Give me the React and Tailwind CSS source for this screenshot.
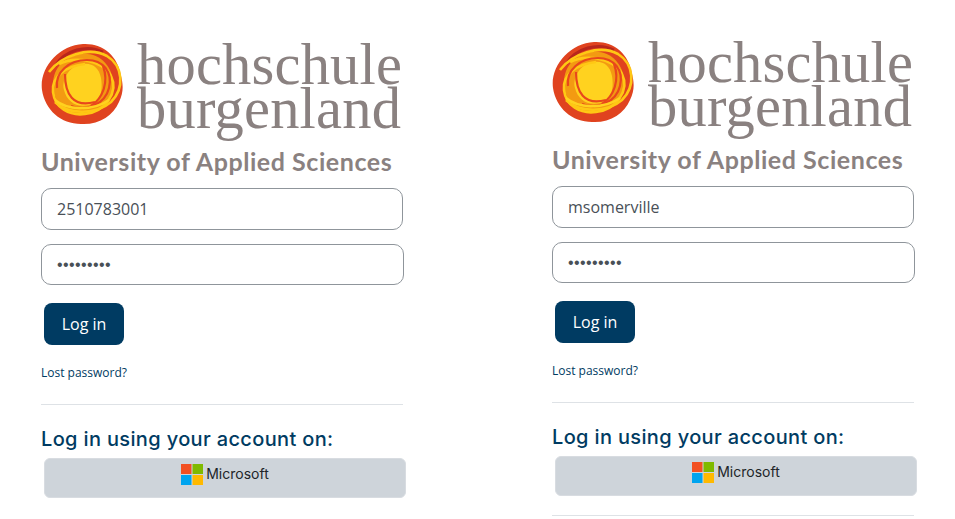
const Swirl = () => (
  <svg width="84" height="84" viewBox="0 0 84 84" className="shrink-0">
    <path d="M42 2C62 1 77 14 80 34C82 42 83 50 78 60C72 74 58 83 40 82C20 82 4 68 1 48C-2 26 18 3 42 2Z" fill="#e0431f" />
    <path d="M14 24C24 8 46 2 62 10" fill="none" stroke="#b8261c" strokeWidth="3" />
    <path d="M40 12C58 10 72 24 72 42C72 60 58 72 40 72C24 72 12 60 12 42C12 26 24 14 40 12Z" fill="#f39a12" />
    <path d="M42 22C52 21 58 26 60 36C62 48 60 60 48 63C36 66 26 60 23 48C20 36 30 23 42 22Z" fill="#ffd21f" />
    <g fill="none" stroke="#ffc814" strokeWidth="2.6">
      <path d="M8 30C20 14 48 4 66 14C82 24 84 46 70 60C56 72 28 74 14 60" />
      <path d="M18 22C34 14 62 18 70 34C78 50 64 70 44 72C28 74 14 66 12 50C10 34 26 24 44 22" />
    </g>
    <g fill="none" stroke="#e8471c" strokeWidth="2.2">
      <path d="M16 46C14 30 28 18 46 18C62 18 72 30 68 46C64 62 46 70 30 64" />
      <path d="M24 32C24 52 32 66 54 60" />
      <path d="M62 24C68 40 62 56 50 64" />
    </g>
    <path d="M14 58C26 68 50 70 68 58" fill="none" stroke="#ffd21f" strokeWidth="2.4" />
  </svg>
);

const MsLogo = () => (
  <svg width="22" height="21" viewBox="0 0 22 21" className="shrink-0">
    <rect x="0" y="0" width="10.5" height="10" fill="#f25022" />
    <rect x="11.5" y="0" width="10.5" height="10" fill="#7fba00" />
    <rect x="0" y="11" width="10.5" height="10" fill="#00a4ef" />
    <rect x="11.5" y="11" width="10.5" height="10" fill="#ffb900" />
  </svg>
);

const Card = ({ user, topClass, extraRule }) => (
  <div className={`w-[362px] shrink-0 flex flex-col ${topClass}`}>
    <div className="flex items-start gap-[12px] h-[95px]">
      <Swirl />
      <div className="flex flex-col text-[#8a8180] font-['Liberation_Serif',serif] text-[58.5px] leading-[44px] pt-[1px]">
        <span className="tracking-[0.2px] whitespace-nowrap">hochschule</span>
        <span className="tracking-[0.2px] whitespace-nowrap">burgenland</span>
      </div>
    </div>
    <div className="mt-[8px] h-[32px] text-[25px] leading-[32px] font-['Lato',sans-serif] font-bold text-[#8a8180] tracking-[0.55px] whitespace-nowrap">
      University of Applied Sciences
    </div>
    <div className="mt-[11px] h-[42px] w-[362px] rounded-[10px] border border-[#8f959b] flex items-center pl-[15px] text-[16px] text-[#495057] font-['Open_Sans',sans-serif]">
      {user}
    </div>
    <div className="mt-[14px] h-[41px] w-[363px] rounded-[10px] border border-[#8f959b] flex items-center pl-[15px] text-[16px] text-[#495057] font-['Liberation_Sans',sans-serif] tracking-[0.4px]">
      •••••••••
    </div>
    <div className="mt-[18px] ml-[3px] h-[42px] w-[80px] rounded-[8px] bg-[#003b62] text-white text-[16px] flex items-center justify-center font-['Open_Sans',sans-serif]">
      Log in
    </div>
    <div className="mt-[19px] h-[17px] text-[12px] leading-[17px] text-[#003b62] font-['Open_Sans',sans-serif]">
      Lost password?
    </div>
    <div className="mt-[23px] h-px bg-[#dee2e6]" />
    <div className="mt-[21px] h-[26px] text-[20px] leading-[26px] font-medium text-[#003b62] font-['Inter',sans-serif] tracking-[0.35px] whitespace-nowrap">
      Log in using your account on:
    </div>
    <div className="mt-[6px] ml-[3px] h-[40px] w-[362px] rounded-[6px] bg-[#ced4da] border border-[#d8dce1] flex items-start justify-center pt-[5px] gap-[3px] text-[14px] text-[#212529] font-['Inter',sans-serif]">
      <MsLogo />
      <span className="leading-[19px]">Microsoft</span>
    </div>
    {extraRule && <div className="mt-[19px] h-px bg-[#dee2e6]" />}
  </div>
);

export default function App() {
  return (
    <div className="h-[519px] w-[955px] overflow-hidden bg-white flex pl-[41px] gap-[149px]">
      <Card user="2510783001" topClass="pt-[42px]" />
      <Card user="msomerville" topClass="pt-[40px]" extraRule />
    </div>
  );
}
